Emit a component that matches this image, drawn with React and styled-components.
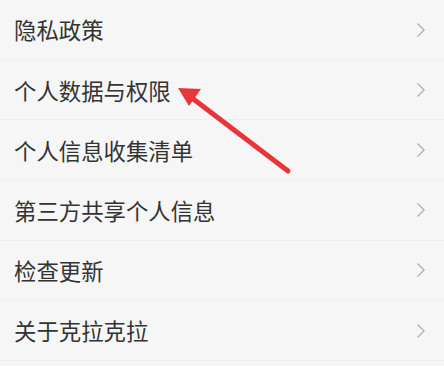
import React from 'react';
import styled, { createGlobalStyle } from 'styled-components';

const GlobalStyle = createGlobalStyle`
  html, body {
    margin: 0;
    padding: 0;
    background: #f6f6f6;
  }
  body {
    font-family: "Noto Sans CJK SC", "Noto Sans", sans-serif;
  }
`;

const Screen = styled.div`
  position: relative;
  width: 444px;
  height: 366px;
  overflow: hidden;
  background: #f6f6f6;
`;

const List = styled.ul`
  list-style: none;
  margin: 0;
  padding: 0;
`;

const Row = styled.li`
  height: 60.2px;
  box-sizing: border-box;
  display: flex;
  align-items: center;
  justify-content: space-between;
  padding: 0 18px 0 14px;
  border-bottom: 1px solid #efefef;
`;

const Label = styled.span`
  font-size: 22.4px;
  color: #333333;
  line-height: 1;
`;

const Chevron = styled.svg`
  width: 10px;
  height: 16px;
  flex: none;
`;

const Pointer = styled.svg`
  position: absolute;
  left: 0;
  top: 0;
  pointer-events: none;
`;

const items = [
  '隐私政策',
  '个人数据与权限',
  '个人信息收集清单',
  '第三方共享个人信息',
  '检查更新',
  '关于克拉克拉',
];

const App = () => (
  <Screen>
    <GlobalStyle />
    <List>
      {items.map((t) => (
        <Row key={t}>
          <Label>{t}</Label>
          <Chevron viewBox="0 0 10 16">
            <path d="M1.5 1.5 L8 8 L1.5 14.5" fill="none" stroke="#b3b3b3" strokeWidth="1.4" />
          </Chevron>
        </Row>
      ))}
    </List>
    <Pointer width="444" height="366" viewBox="0 0 444 366">
      <line x1="288" y1="171" x2="192" y2="98" stroke="#e8353a" strokeWidth="5" strokeLinecap="round" />
      <polygon points="178,88 201,89 189,106" fill="#e8353a" />
    </Pointer>
  </Screen>
);

export default App;
